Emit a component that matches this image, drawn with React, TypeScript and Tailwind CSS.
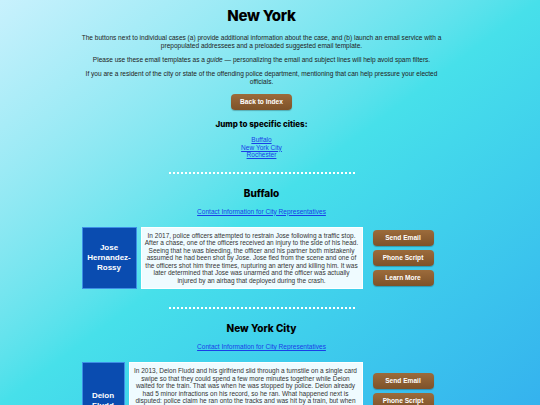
import React from "react";

const btn =
  "block w-[61px] h-[16px] rounded-[4px] bg-gradient-to-b from-[#9c6b3b] to-[#7e5229] text-white font-bold text-[6.6px] leading-[16px] text-center shadow-[0_1px_1px_rgba(0,0,0,0.25)]";

function Buttons() {
  return (
    <div className="flex flex-col gap-[4px] ml-[10px] shrink-0">
      <div className={btn}>Send Email</div>
      <div className={btn}>Phone Script</div>
      <div className={btn}>Learn More</div>
    </div>
  );
}

function Card({ name, nameW, text }: { name: React.ReactNode; nameW: string; text: string }) {
  return (
    <div className="flex items-center w-[352px] ml-[1px]">
      <div className="flex self-stretch gap-[4px] flex-1">
        <div
          className={`${nameW} shrink-0 bg-[#0a4cb0] border border-[#3d8fe6] text-white font-bold text-[8px] leading-[10px] text-center flex items-center justify-center px-[2px]`}
        >
          {name}
        </div>
        <div className="flex-1 bg-[#effbff] border border-[#ffffff] text-[#333] text-[6.5px] leading-[7.5px] text-center px-[3px] py-[4px]">
          {text}
        </div>
      </div>
      <Buttons />
    </div>
  );
}

function Divider() {
  return <div className="w-[186px] mx-auto border-t-[2px] border-dotted border-white" />;
}

export default function App() {
  const heading = { fontFamily: "Inter, 'DejaVu Sans', sans-serif" };
  return (
    <div
      className="min-h-screen bg-fixed bg-gradient-to-br from-[#c8f1fd] via-[#47e0ea] to-[#35b2ee] pr-[17px]"
      style={{ fontFamily: "'Liberation Sans', Arial, sans-serif" }}
    >
      <div className="w-[362px] mx-auto flex flex-col items-center text-[#222]">
        <h1 className="mt-[7px] text-[15px] leading-[18px] font-extrabold text-black tracking-[-0.3px]" style={heading}>
          New York
        </h1>
        <p className="mt-[9px] text-[6.55px] leading-[7.5px] text-center">
          The buttons next to individual cases (a) provide additional information about the case, and (b) launch an email service with a prepopulated addressees and a preloaded suggested email template.
        </p>
        <p className="mt-[7px] text-[6.55px] leading-[7.5px] text-center">
          Please use these email templates as a <i>guide</i> — personalizing the email and subject lines will help avoid spam filters.
        </p>
        <p className="mt-[6.5px] text-[6.55px] leading-[7.5px] text-center">
          If you are a resident of the city or state of the offending police department, mentioning that can help pressure your elected officials.
        </p>
        <div className={`${btn} mt-[9px]`}>Back to Index</div>
        <h3 className="mt-[9px] text-[8px] leading-[10px] font-extrabold text-black" style={heading}>
          Jump to specific cities:
        </h3>
        <div className="mt-[7px] flex flex-col items-center text-[6.55px] leading-[7.5px] text-[#1a3ee8] underline">
          <span>Buffalo</span>
          <span>New York City</span>
          <span>Rochester</span>
        </div>
        <div className="mt-[13px]" />
        <Divider />
        <h2 className="mt-[13px] text-[10px] leading-[12px] font-extrabold text-black" style={heading}>
          Buffalo
        </h2>
        <span className="mt-[9px] text-[6.55px] leading-[8px] text-[#1a3ee8] underline">
          Contact Information for City Representatives
        </span>
        <div className="mt-[11px] self-start">
          <Card
            nameW="w-[55px]"
            name={<span>Jose<br />Hernandez-<br />Rossy</span>}
            text="In 2017, police officers attempted to restrain Jose following a traffic stop. After a chase, one of the officers received an injury to the side of his head. Seeing that he was bleeding, the officer and his partner both mistakenly assumed he had been shot by Jose. Jose fled from the scene and one of the officers shot him three times, rupturing an artery and killing him. It was later determined that Jose was unarmed and the officer was actually injured by an airbag that deployed during the crash."
          />
        </div>
        <div className="mt-[18px]" />
        <Divider />
        <h2 className="mt-[13px] text-[10px] leading-[12px] font-extrabold text-black" style={heading}>
          New York City
        </h2>
        <span className="mt-[9px] text-[6.55px] leading-[8px] text-[#1a3ee8] underline">
          Contact Information for City Representatives
        </span>
        <div className="mt-[11px] self-start">
          <Card
            nameW="w-[43px]"
            name={<span>Deion<br />Fludd</span>}
            text="In 2013, Deion Fludd and his girlfriend slid through a turnstile on a single card swipe so that they could spend a few more minutes together while Deion waited for the train. That was when he was stopped by police. Deion already had 5 minor infractions on his record, so he ran. What happened next is disputed: police claim he ran onto the tracks and was hit by a train, but when Deion woke up in the hospital, he said officers chased him down, beat him, and pushed him onto the tracks. He was left with a fractured skull, a collapsed lung, and lost both of his legs. He spent months in a coma before he died in 2016 from complications related to his injuries."
          />
        </div>
        <div className="h-[40px]" />
      </div>
    </div>
  );
}
